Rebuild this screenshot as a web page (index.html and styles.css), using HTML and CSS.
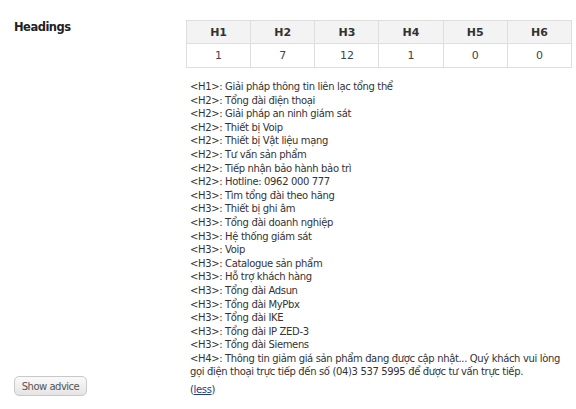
FILE: index.html
```html
<!DOCTYPE html>
<html lang="vi">
<head>
    <meta charset="UTF-8">
    <title>Headings</title>
    <link rel="stylesheet" href="styles.css">
</head>
<body>
    <div class="section">
        <div class="side">
            <h3 class="side-title">Headings</h3>
            <button class="advice-btn">Show advice</button>
        </div>

        <div class="content">
            <table class="count-table">
                <tr>
                    <th>H1</th><th>H2</th><th>H3</th><th>H4</th><th>H5</th><th>H6</th>
                </tr>
                <tr>
                    <td>1</td><td>7</td><td>12</td><td>1</td><td>0</td><td>0</td>
                </tr>
            </table>

            <div class="heading-list">
                <div>&lt;H1&gt;: Giải pháp thông tin liên lạc tổng thể</div>
                <div>&lt;H2&gt;: Tổng đài điện thoại</div>
                <div>&lt;H2&gt;: Giải pháp an ninh giám sát</div>
                <div>&lt;H2&gt;: Thiết bị Voip</div>
                <div>&lt;H2&gt;: Thiết bị Vật liệu mạng</div>
                <div>&lt;H2&gt;: Tư vấn sản phẩm</div>
                <div>&lt;H2&gt;: Tiếp nhận bảo hành bảo trì</div>
                <div>&lt;H2&gt;: Hotline: 0962 000 777</div>
                <div>&lt;H3&gt;: Tìm tổng đài theo hãng</div>
                <div>&lt;H3&gt;: Thiết bị ghi âm</div>
                <div>&lt;H3&gt;: Tổng đài doanh nghiệp</div>
                <div>&lt;H3&gt;: Hệ thống giám sát</div>
                <div>&lt;H3&gt;: Voip</div>
                <div>&lt;H3&gt;: Catalogue sản phẩm</div>
                <div>&lt;H3&gt;: Hỗ trợ khách hàng</div>
                <div>&lt;H3&gt;: Tổng đài Adsun</div>
                <div>&lt;H3&gt;: Tổng đài MyPbx</div>
                <div>&lt;H3&gt;: Tổng đài IKE</div>
                <div>&lt;H3&gt;: Tổng đài IP ZED-3</div>
                <div>&lt;H3&gt;: Tổng đài Siemens</div>
                <div>&lt;H4&gt;: Thông tin giảm giá sản phẩm đang được cập nhật... Quý khách vui lòng gọi điện thoại trực tiếp đến số (04)3 537 5995 để được tư vấn trực tiếp.</div>
            </div>

            <div class="less">(<a href="#">less</a>)</div>
        </div>
    </div>
</body>
</html>
```

FILE: styles.css
```css
* {
    margin: 0;
    padding: 0;
    box-sizing: border-box;
}

body {
    font-family: "DejaVu Sans", Verdana, sans-serif;
    font-size: 10px;
    letter-spacing: -0.35px;
    color: #333;
    background: #fff;
    width: 576px;
    height: 409px;
    overflow: hidden;
}

.section {
    display: flex;
    padding: 18px 4px 0 0;
}

.side {
    width: 186px;
    flex-shrink: 0;
    display: flex;
    flex-direction: column;
    justify-content: space-between;
    padding-left: 14px;
}

.side-title {
    font-size: 11.5px;
    font-weight: bold;
    letter-spacing: -0.5px;
    color: #222;
    margin-top: 2px;
}

.advice-btn {
    width: 73px;
    height: 20px;
    margin-bottom: -1px;
    font-family: inherit;
    font-size: 10px;
    letter-spacing: -0.5px;
    color: #555;
    border: 1px solid #c8c8c8;
    border-radius: 5px;
    background: linear-gradient(#fafafa, #e4e4e4);
    cursor: pointer;
}

.content {
    flex: 1;
}

.count-table {
    width: 100%;
    border-collapse: collapse;
    table-layout: fixed;
    margin-top: 2px;
}

.count-table th,
.count-table td {
    border: 1px solid #dedede;
    text-align: center;
    color: #444;
    letter-spacing: 0;
}

.count-table th {
    height: 23px;
    font-size: 11px;
    color: #333;
    background: #f3f3f3;
}

.count-table td {
    height: 24px;
    font-size: 11px;
}

.heading-list {
    padding: 12px 0 0 4px;
    line-height: 13.6px;
    color: #333;
}

.less {
    padding: 5px 0 0 4px;
    color: #333;
}

.less a {
    color: #1a3a8c;
}
```
